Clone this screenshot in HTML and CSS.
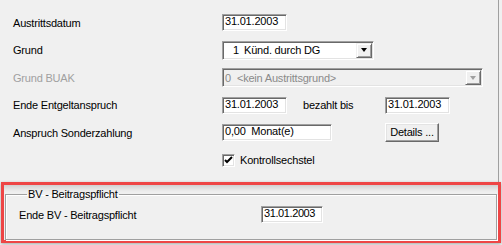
FILE: index.html
```html
<!DOCTYPE html>
<html lang="de">
<head>
  <meta charset="UTF-8">
  <title>Austritt</title>
  <link rel="stylesheet" href="styles.css">
</head>
<body>
  <div class="panel">
    <div class="form">
      <div class="label">Austrittsdatum</div>
      <div class="field"><div class="edit date">31.01.2003</div></div>

      <div class="label">Grund</div>
      <div class="field">
        <div class="combo grund">
          <span class="code">1</span><span>Künd. durch DG</span>
          <span class="drop"><span class="arrow"></span></span>
        </div>
      </div>

      <div class="label disabled">Grund BUAK</div>
      <div class="field">
        <div class="combo buak off">
          <span class="code-left">0</span><span>&lt;kein Austrittsgrund&gt;</span>
          <span class="drop"><span class="arrow"></span></span>
        </div>
      </div>

      <div class="label">Ende Entgeltanspruch</div>
      <div class="field">
        <div class="edit date">31.01.2003</div>
        <span class="mid-label">bezahlt bis</span>
        <div class="edit date">31.01.2003</div>
      </div>

      <div class="label">Anspruch Sonderzahlung</div>
      <div class="field">
        <div class="edit months">0,00&nbsp; Monat(e)</div>
        <div class="button">Details ...</div>
      </div>

      <div class="label"></div>
      <div class="field">
        <span class="check">
          <svg width="9" height="9" viewBox="0 0 9 9"><path d="M1 4 L3 6 L8 1" fill="none" stroke="#000" stroke-width="2"/></svg>
        </span>
        <span class="check-label">Kontrollsechstel</span>
      </div>
    </div>
  </div>

  <div class="highlight">
    <fieldset class="group">
      <legend>BV - Beitragspflicht</legend>
      <div class="group-row">
        <span class="group-label">Ende BV - Beitragspflicht</span>
        <div class="edit date bv">31.01.2003</div>
      </div>
    </fieldset>
  </div>
</body>
</html>
```
FILE: styles.css
```css
body {
  margin: 0;
  background-color: #f0f0f0;
  font-family: 'Liberation Sans', Arial, sans-serif;
  font-size: 11px;
  letter-spacing: -0.2px;
  color: #000;
  width: 502px;
  height: 245px;
  overflow: hidden;
}

.panel {
  width: 499px;
  height: 182px;
  border-right: 1px solid #a0a0a0;
  box-sizing: border-box;
}

.form {
  display: grid;
  grid-template-columns: 209px 1fr;
  grid-auto-rows: 27.5px;
  align-items: center;
  padding: 9px 0 0 13px;
}

.label.disabled {
  color: #a0a0a0;
}

.field {
  display: flex;
  align-items: center;
}

/* sunken edit box */
.edit {
  box-sizing: border-box;
  height: 17px;
  line-height: 13px;
  padding: 0 0 0 2px;
  background-color: #fff;
  border: 1px solid;
  border-color: #a0a0a0 #fff #fff #a0a0a0;
  box-shadow: inset 1px 1px #696969, inset -1px -1px #e3e3e3;
  white-space: nowrap;
}

.date {
  width: 65px;
}

.date.bv {
  width: 62px;
  letter-spacing: -0.4px;
}

.months {
  width: 110px;
}

.mid-label {
  width: 82px;
  padding-left: 16px;
}

.combo {
  position: relative;
  box-sizing: border-box;
  height: 19px;
  display: flex;
  align-items: center;
  background-color: #fff;
  border: 1px solid;
  border-color: #a0a0a0 #fff #fff #a0a0a0;
  box-shadow: inset 1px 1px #696969, inset -1px -1px #e3e3e3;
  white-space: nowrap;
}

.combo.grund {
  width: 152px;
}

.combo.buak {
  width: 261px;
}

.combo.off {
  background-color: #f0f0f0;
  color: #8a8a8a;
}

.code {
  width: 16px;
  text-align: right;
  margin-right: 5px;
}

.code-left {
  margin-left: 2px;
  margin-right: 6px;
}

.drop {
  position: absolute;
  top: 1px;
  right: 1px;
  width: 16px;
  height: 15px;
  box-sizing: border-box;
  background-color: #f0f0f0;
  border: 1px solid;
  border-color: #f0f0f0 #696969 #696969 #f0f0f0;
  box-shadow: inset 1px 1px #fff, inset -1px -1px #a0a0a0;
  display: flex;
  align-items: center;
  justify-content: center;
}

.arrow {
  width: 0;
  height: 0;
  border-left: 3.5px solid transparent;
  border-right: 3.5px solid transparent;
  border-top: 4px solid #000;
}

.off .arrow {
  border-top-color: #a0a0a0;
}

.button {
  box-sizing: border-box;
  width: 54px;
  height: 19px;
  margin-left: 53px;
  line-height: 17px;
  text-align: center;
  background-color: #f0f0f0;
  border: 1px solid;
  border-color: #fff #696969 #696969 #fff;
  box-shadow: inset -1px -1px #a0a0a0, inset 1px 1px #e3e3e3;
}

.check {
  box-sizing: border-box;
  width: 13px;
  height: 13px;
  background-color: #fff;
  border: 1px solid;
  border-color: #a0a0a0 #fff #fff #a0a0a0;
  box-shadow: inset 1px 1px #696969, inset -1px -1px #e3e3e3;
  display: flex;
  align-items: center;
  justify-content: center;
}

.check-label {
  margin-left: 5px;
}

/* red annotation frame */
.highlight {
  margin: 0 1px;
  height: 61px;
  box-sizing: border-box;
  border: 3px solid #ee4545;
  box-shadow: inset 0 8px 6px -6px rgba(0, 0, 0, 0.18), 0 1px 3px rgba(0, 0, 0, 0.3);
  padding: 3px 1px 0 1px;
}

.group {
  margin: 0;
  height: 52px;
  box-sizing: border-box;
  padding: 5px 0 0 13px;
  border: 1px solid #a0a0a0;
  box-shadow: 1px 1px #fff, inset 1px 1px #fff;
}

.group legend {
  padding: 0 1px;
  margin-left: 8px;
  line-height: 13px;
}

.group-row {
  display: flex;
  align-items: center;
}

.group-label {
  width: 242px;
}
```
